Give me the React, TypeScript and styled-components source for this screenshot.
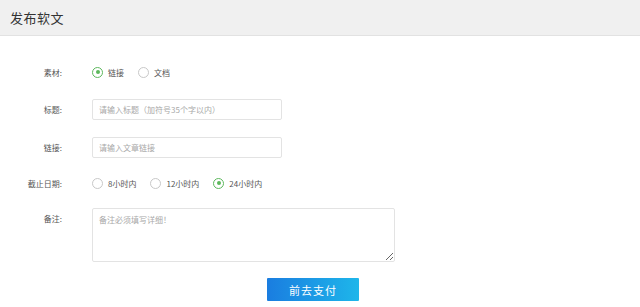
import React from 'react';
import styled, { createGlobalStyle } from 'styled-components';

const GlobalStyle = createGlobalStyle`
  html, body {
    margin: 0;
    padding: 0;
    background: #fff;
    font-family: "Microsoft YaHei", "Noto Sans CJK SC", "Liberation Sans", sans-serif;
  }
`;

const Header = styled.div`
  height: 36px;
  display: flex;
  align-items: center;
  padding-left: 10px;
  background: #f0f0f0;
  border-bottom: 1px solid #e2e2e2;
  box-sizing: border-box;
`;

const Title = styled.h1`
  margin: 0;
  font-size: 13px;
  font-weight: normal;
  color: #333;
  letter-spacing: 0.5px;
`;

const Form = styled.div`
  padding-top: 25px;
`;

const Row = styled.div<{ $h: number; $mb: number; $top?: boolean }>`
  display: grid;
  grid-template-columns: 62px 1fr;
  column-gap: 30px;
  align-items: ${({ $top }) => ($top ? 'start' : 'center')};
  min-height: ${({ $h }) => $h}px;
  margin-bottom: ${({ $mb }) => $mb}px;
`;

const Label = styled.div<{ $top?: boolean }>`
  text-align: right;
  padding-top: ${({ $top }) => ($top ? '5px' : '0')};
  font-size: 8px;
  color: #555;
`;

const RadioGroup = styled.div`
  display: flex;
  align-items: center;
  gap: 14px;
`;

const RadioItem = styled.label`
  display: flex;
  align-items: center;
  gap: 5px;
  font-size: 8px;
  color: #555;
`;

const Circle = styled.span<{ $on?: boolean }>`
  width: 9px;
  height: 9px;
  border-radius: 50%;
  border: 1px solid ${({ $on }) => ($on ? '#5cb85c' : '#c8c8c8')};
  background: #fff;
  display: flex;
  align-items: center;
  justify-content: center;
  &::after {
    content: '';
    display: ${({ $on }) => ($on ? 'block' : 'none')};
    width: 4px;
    height: 4px;
    border-radius: 50%;
    background: #5cb85c;
  }
`;

const Input = styled.input`
  display: block;
  width: 190px;
  height: 21px;
  box-sizing: border-box;
  border: 1px solid #e3e3e3;
  border-radius: 2px;
  padding: 0 6px;
  font-size: 8px;
  font-family: inherit;
  outline: none;
  &::placeholder {
    color: #a8a8a8;
  }
`;

const TextArea = styled.textarea`
  display: block;
  width: 303px;
  height: 54px;
  box-sizing: border-box;
  border: 1px solid #e3e3e3;
  border-radius: 2px;
  padding: 5px 6px;
  font-size: 8px;
  font-family: inherit;
  outline: none;
  resize: vertical;
  &::placeholder {
    color: #a8a8a8;
  }
`;

const Actions = styled.div`
  display: flex;
  padding-left: 267px;
  margin-top: 16px;
`;

const PayButton = styled.button`
  width: 92px;
  height: 23px;
  border: none;
  border-radius: 1px;
  background: linear-gradient(90deg, #1a7de0 0%, #1eb6ea 100%);
  color: #fff;
  font-size: 11px;
  font-family: inherit;
  letter-spacing: 1px;
  cursor: pointer;
`;

type Opt = { text: string; on?: boolean };

const Radios = ({ options }: { options: Opt[] }) => (
  <RadioGroup>
    {options.map((o) => (
      <RadioItem key={o.text}>
        <Circle $on={o.on} />
        {o.text}
      </RadioItem>
    ))}
  </RadioGroup>
);

export default function App() {
  return (
    <>
      <GlobalStyle />
      <Header>
        <Title>发布软文</Title>
      </Header>
      <Form>
        <Row $h={22} $mb={16}>
          <Label>素材:</Label>
          <Radios options={[{ text: '链接', on: true }, { text: '文档' }]} />
        </Row>

        <Row $h={21} $mb={17}>
          <Label>标题:</Label>
          <Input placeholder="请输入标题（加符号35个字以内）" />
        </Row>

        <Row $h={21} $mb={14}>
          <Label>链接:</Label>
          <Input placeholder="请输入文章链接" />
        </Row>

        <Row $h={22} $mb={14}>
          <Label>截止日期:</Label>
          <Radios options={[{ text: '8小时内' }, { text: '12小时内' }, { text: '24小时内', on: true }]} />
        </Row>

        <Row $h={54} $mb={0} $top>
          <Label $top>备注:</Label>
          <TextArea placeholder="备注必须填写详细！" />
        </Row>

        <Actions>
          <PayButton>前去支付</PayButton>
        </Actions>
      </Form>
    </>
  );
}
